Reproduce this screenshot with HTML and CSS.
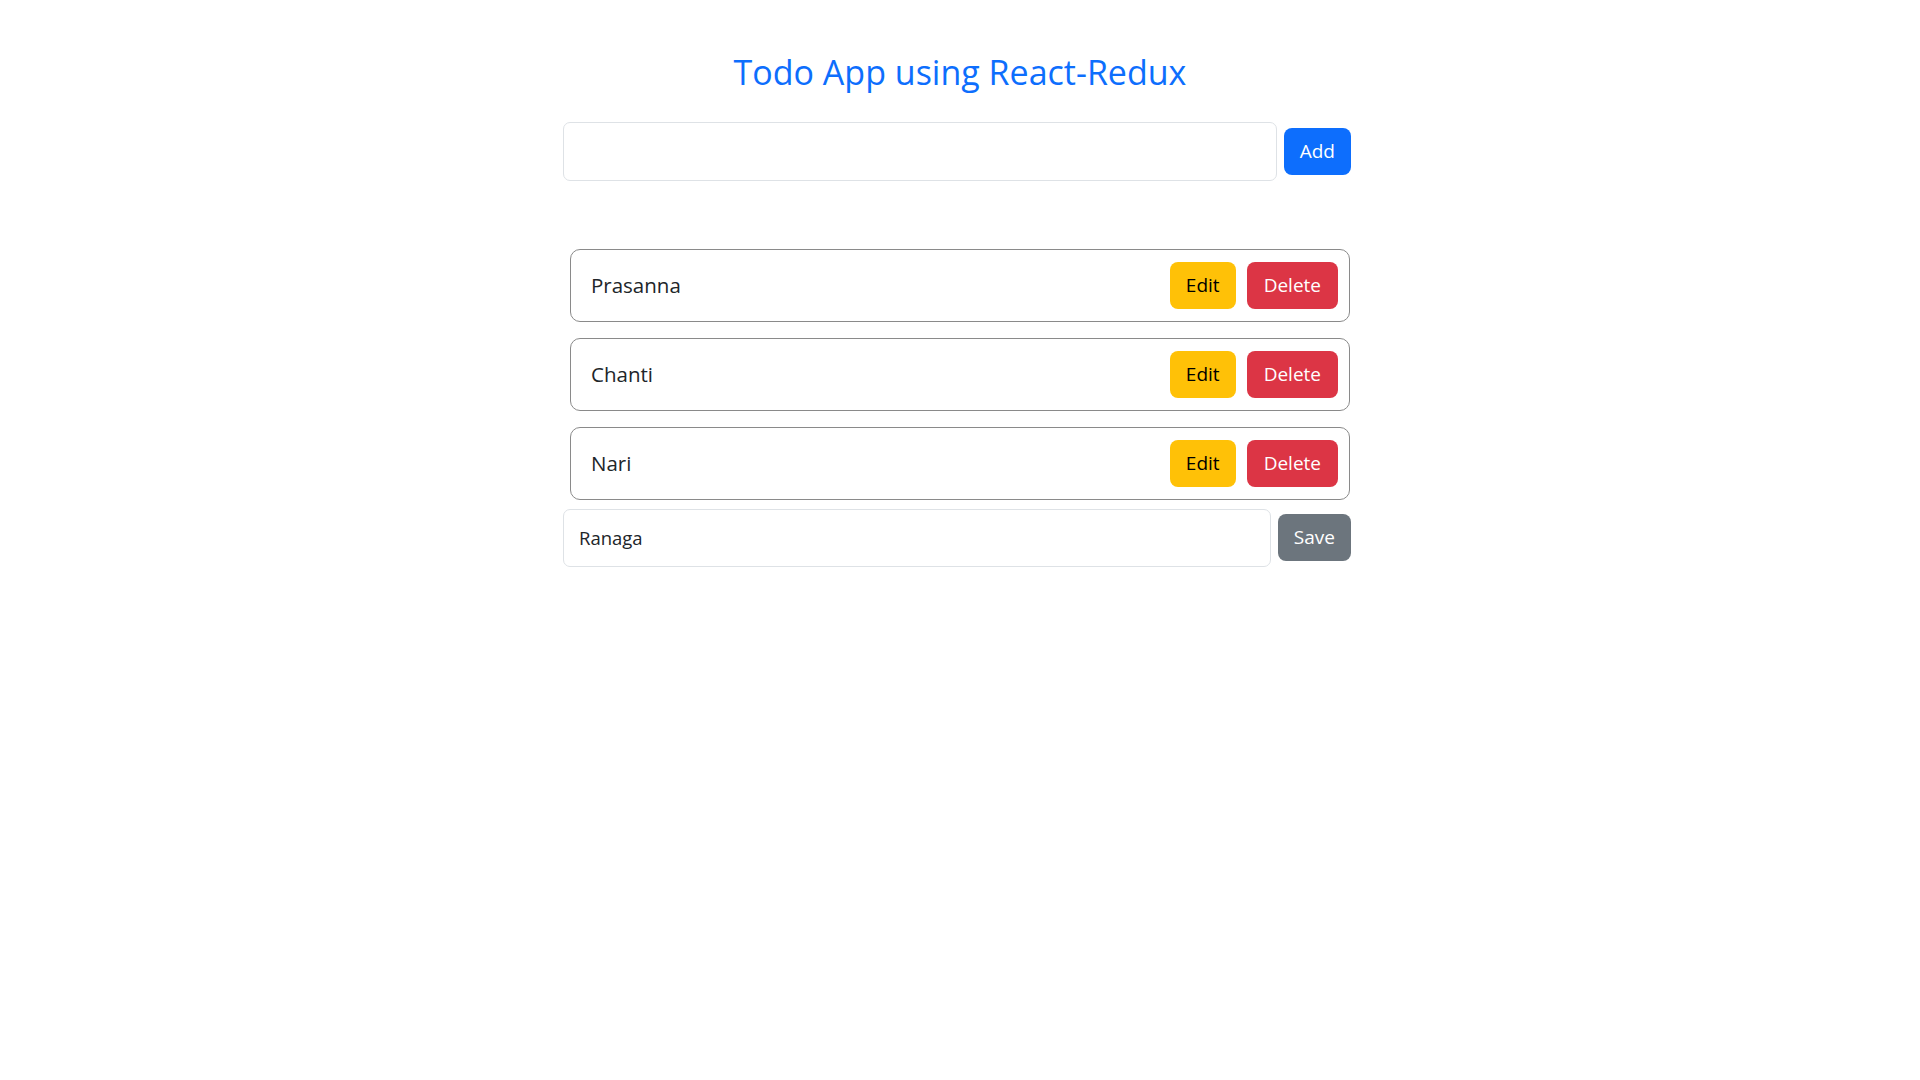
FILE: index.html
```html
<!DOCTYPE html>
<html lang="en">
<head>
<meta charset="utf-8">
<title>Todo App using React-Redux</title>
<link rel="stylesheet" href="styles.css">
</head>
<body>
<div class="app">
  <h1 class="title">Todo App using React-Redux</h1>
  <div class="add-row">
    <input class="field field-add" type="text">
    <button class="btn btn-primary">Add</button>
  </div>
  <ul class="todo-list">
    <li class="todo-item">
      <span class="todo-text">Prasanna</span>
      <div class="actions">
        <button class="btn btn-warning">Edit</button>
        <button class="btn btn-danger">Delete</button>
      </div>
    </li>
    <li class="todo-item">
      <span class="todo-text">Chanti</span>
      <div class="actions">
        <button class="btn btn-warning">Edit</button>
        <button class="btn btn-danger">Delete</button>
      </div>
    </li>
    <li class="todo-item">
      <span class="todo-text">Nari</span>
      <div class="actions">
        <button class="btn btn-warning">Edit</button>
        <button class="btn btn-danger">Delete</button>
      </div>
    </li>
  </ul>
  <div class="edit-row">
    <input class="field field-edit" type="text" value="Ranaga">
    <button class="btn btn-secondary">Save</button>
  </div>
</div>
</body>
</html>
```
FILE: styles.css
```css
html, body {
  margin: 0;
  padding: 0;
  background: #ffffff;
}

body {
  font-family: "Open Sans", "Noto Sans", sans-serif;
  color: #212529;
}

.app {
  width: 794px;
  margin: 0 auto;
  padding-top: 52px;
}

.title {
  margin: 0;
  text-align: center;
  font-size: 34px;
  font-weight: 400;
  line-height: 1.2;
  color: #0d6efd;
}

.add-row,
.edit-row {
  display: flex;
  align-items: center;
  gap: 7px;
  width: 788px;
}

.add-row {
  margin-top: 29px;
}

.field {
  box-sizing: border-box;
  border: 1px solid #dee2e6;
  border-radius: 7px;
  background: #fff;
  font-family: inherit;
  color: #212529;
  outline: none;
}

.field-add {
  flex: 1;
  height: 59px;
  padding: 0 16px;
  font-size: 18.5px;
}

.field-edit {
  flex: 1;
  height: 58px;
  padding: 0 15px;
  font-size: 18.5px;
}

.btn {
  box-sizing: border-box;
  height: 47px;
  padding: 0 16px;
  border: 0;
  border-radius: 8px;
  font-family: inherit;
  font-size: 19px;
  line-height: 1;
  color: #fff;
  cursor: pointer;
}

.btn-primary { background: #0d6efd; }
.btn-warning { background: #ffc107; color: #000; }
.btn-danger { background: #dc3545; padding: 0 17px; }
.btn-secondary { background: #6c757d; }

.todo-list {
  list-style: none;
  margin: 68px 0 0 7px;
  padding: 0;
  width: 780px;
  display: flex;
  flex-direction: column;
  gap: 16px;
}

.todo-item {
  box-sizing: border-box;
  display: flex;
  align-items: center;
  justify-content: space-between;
  height: 73px;
  padding: 12px 11px 12px 20px;
  border: 1px solid #8a8a8a;
  border-radius: 10px;
}

.todo-text {
  font-size: 20.5px;
}

.actions {
  display: flex;
  gap: 11px;
}

.edit-row {
  margin-top: 9px;
}
```
